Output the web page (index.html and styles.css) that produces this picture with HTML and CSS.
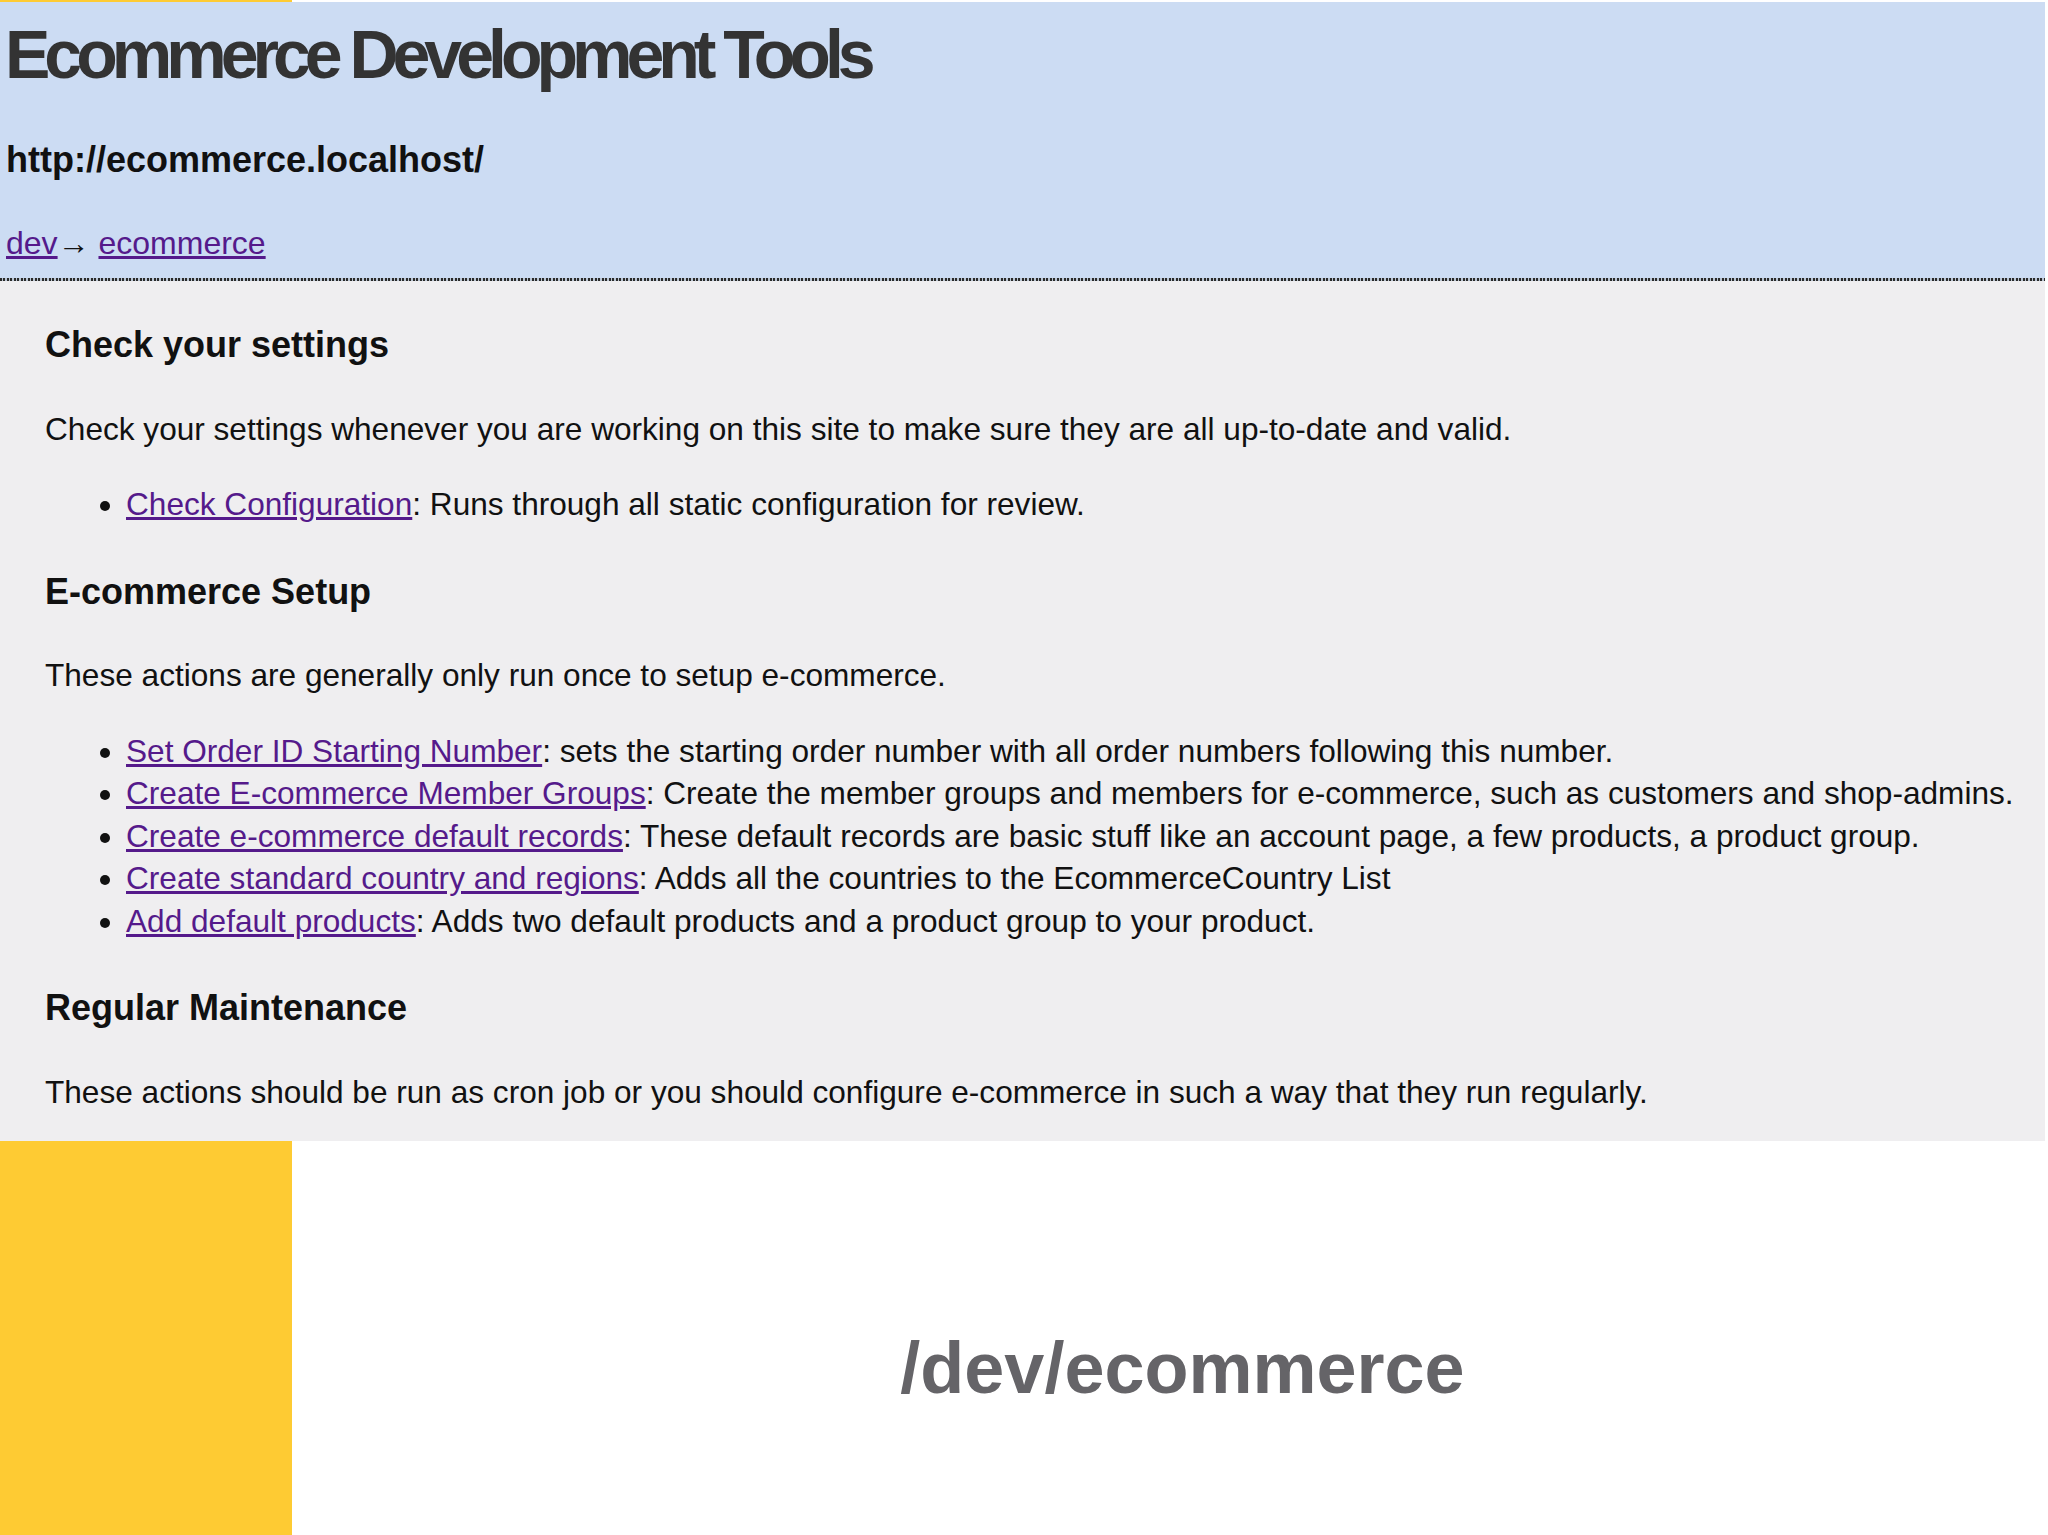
FILE: index.html
```html
<!DOCTYPE html>
<html lang="en">
<head>
    <meta charset="UTF-8">
    <meta name="viewport" content="width=device-width, initial-scale=1.0">
    <title>/dev/ecommerce</title>
    <link rel="stylesheet" href="styles.css">
</head>
<body>
    <div class="slide">
        <div class="sidebar"></div>

        <div class="shot">
            <div class="info">
                <h1>Ecommerce Development Tools</h1>
                <h3>http://ecommerce.localhost/</h3>
                <p class="crumbs"><a href="#">dev</a>&rarr; <a href="#">ecommerce</a></p>
            </div>

            <div class="options">
                <h2>Check your settings</h2>
                <p>Check your settings whenever you are working on this site to make sure they are all up-to-date and valid.</p>
                <ul>
                    <li><a href="#">Check Configuration</a>: Runs through all static configuration for review.</li>
                </ul>

                <h2>E-commerce Setup</h2>
                <p>These actions are generally only run once to setup e-commerce.</p>
                <ul>
                    <li><a href="#">Set Order ID Starting Number</a>: sets the starting order number with all order numbers following this number.</li>
                    <li><a href="#">Create E-commerce Member Groups</a>: Create the member groups and members for e-commerce, such as customers and shop-admins.</li>
                    <li><a href="#">Create e-commerce default records</a>: These default records are basic stuff like an account page, a few products, a product group.</li>
                    <li><a href="#">Create standard country and regions</a>: Adds all the countries to the EcommerceCountry List</li>
                    <li><a href="#">Add default products</a>: Adds two default products and a product group to your product.</li>
                </ul>

                <h2>Regular Maintenance</h2>
                <p>These actions should be run as cron job or you should configure e-commerce in such a way that they run regularly.</p>
            </div>
        </div>

        <div class="caption">/dev/ecommerce</div>
    </div>
</body>
</html>
```

FILE: styles.css
```css
:root {
    --yellow: #fecb33;
    --info-bg: #ccdcf3;
    --page-bg: #efeef0;
    --link: #551a8b;
    --caption: #656468;
}

body {
    margin: 0;
    background: #ffffff;
    font-family: "Liberation Sans", Arial, sans-serif;
    color: #111;
}

.slide {
    display: grid;
    grid-template-columns: 292px 1fr;
    grid-template-rows: 2px auto 1fr;
    height: 1535px;
}

.sidebar {
    grid-column: 1;
    grid-row: 1 / 4;
    background: var(--yellow);
}

/* the screenshot sits over the top of the slide */
.shot {
    grid-column: 1 / 3;
    grid-row: 2;
    margin-right: 3px;
    background: var(--page-bg);
}

.info {
    padding: 18px 6px 22px;
    background:
        repeating-linear-gradient(90deg, #2a2a2a 0 2px, #b9c4d2 2px 3.5px) left bottom / 100% 3px no-repeat,
        var(--info-bg);
}

.info h1 {
    margin: 0 0 0 -1px;
    font-size: 68px;
    line-height: 68px;
    letter-spacing: -6px;
    color: #333;
}

.info h3 {
    margin: 54px 0 0;
    font-size: 36px;
    line-height: 36px;
    color: #111;
}

.crumbs {
    margin: 50px 0 0;
    font-size: 32px;
    line-height: 31px;
}

a {
    color: var(--link);
}

.options {
    padding: 43px 0 28px 45px;
    font-size: 31.6px;
    line-height: 42.5px;
}

.options h2 {
    margin: 0 0 41px;
    font-size: 36px;
    line-height: 42.5px;
}

.options p {
    margin: 0 0 33px;
}

.options p:last-child {
    margin-bottom: 0;
}

.options ul {
    margin: 0 0 45px;
    padding-left: 81px;
}

.options li {
    white-space: nowrap;
}

.caption {
    grid-column: 2;
    grid-row: 3;
    display: flex;
    align-items: center;
    justify-content: center;
    padding: 60px 0 0 25px;
    font-size: 72px;
    font-weight: bold;
    line-height: 1;
    color: var(--caption);
}
```
